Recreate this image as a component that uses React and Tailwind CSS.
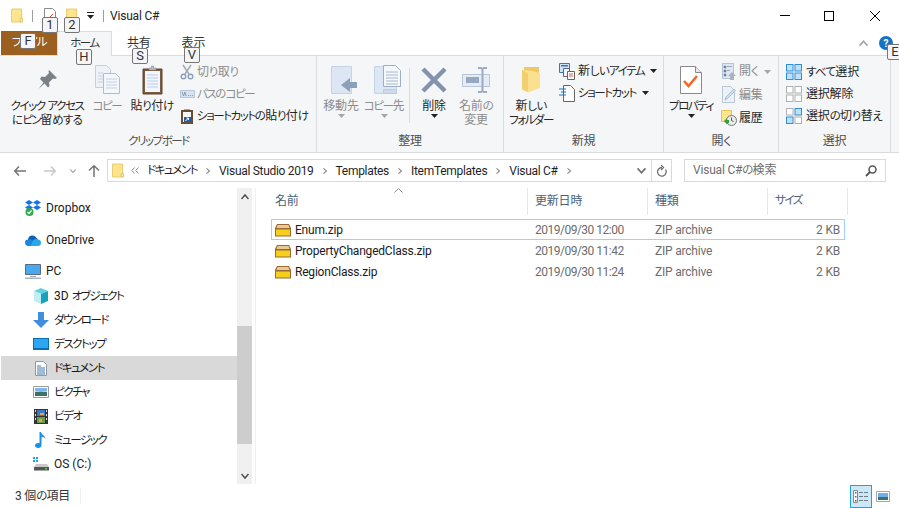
import React from "react";

const T = ({ children }) => (
  <>
    {String(children)
      .split(/([\u30a0-\u30ff]+|[\u3040-\u309f]+)/)
      .map((p, i) =>
        /^[\u30a0-\u30ff]/.test(p) ? (
          <span key={i} className="text-[11.5px] tracking-[-1.45px]">{p}</span>
        ) : /^[\u3040-\u309f]/.test(p) ? (
          <span key={i} className="text-[11.5px] tracking-[-0.7px]">{p}</span>
        ) : (
          p
        )
      )}
  </>
);

const Folder = ({ className = "" }) => (
  <svg viewBox="0 0 13 15" className={className}>
    <path d="M.5.5h11v14H.5z" fill="#fde58f" stroke="#e8c767" />
    <path d="M10 11h2.5v3.5H10z" fill="#fff3c4" stroke="#e3bd5b" />
  </svg>
);

const Key = ({ c, t }) => (
  <div className={`absolute h-[16px] w-[16px] rounded-[2px] border border-[#767676] bg-[#f3f5f8] text-center text-[13px] leading-[14px] tracking-normal text-[#333] ${c}`}>{t}</div>
);

const PinIcon = () => (
  <svg width="21" height="21" viewBox="0 0 21 21"><path d="M12 1l8 8-2 1-2-.5-4 4 .5 3.500-1.500 1.500-3.500-4-6 5.500 5-6.500-3.500-3.500L4.500 7.500 8 8l4-4-.5-1.500z" fill="#7a8087" /></svg>
);
const CopyIcon = () => (
  <svg width="25" height="29" viewBox="0 0 25 29">
    <path d="M.5.5h11l4 4v18H.5z" fill="#eef2f8" stroke="#c2cfdf" />
    <path d="M8.500 8.500h12l4 4v16h-16z" fill="#f3f6fa" stroke="#aebdd0" />
    <path d="M11 14h11M11 17h11M11 20h11M11 23h11M3 8h5M3 11h5M3 14h5M3 17h5" stroke="#c5d1e0" />
  </svg>
);
const PasteIcon = () => (
  <svg width="21" height="30" viewBox="0 0 21 30">
    <path d="M1 4h19v25H1z" fill="#7c5b3f" stroke="#5f4530" />
    <path d="M3 6h15v21H3z" fill="#f1f6ff" />
    <path d="M5 10h11M5 13h11M5 16h11M5 19h11M5 22h11" stroke="#b9cfe9" />
    <path d="M7 5V3h2.500V1h2v2H14v2z" fill="#b9bec4" stroke="#8a8f96" strokeWidth=".6" />
  </svg>
);
const ScissorsIcon = () => (
  <svg width="14" height="16" viewBox="0 0 14 16" fill="none">
    <path d="M3 1l6 9M11 1L5 10" stroke="#a3a9b0" strokeWidth="1.500" />
    <circle cx="3.500" cy="12.500" r="2.300" stroke="#8ba0bd" strokeWidth="1.400" />
    <circle cx="10.500" cy="12.500" r="2.300" stroke="#8ba0bd" strokeWidth="1.400" />
  </svg>
);
const PathIcon = () => (
  <svg width="15" height="8" viewBox="0 0 15 8" className="shrink-0">
    <path d="M.5.5h14v7H.5z" fill="#d8e2f0" stroke="#b7c7dc" />
    <path d="M2 2l1.500 4L5 2l1 4M8 5.500h1M10 5.500h1M12 5.500h1" stroke="#7a8aa0" strokeWidth=".8" fill="none" />
  </svg>
);
const ShortcutPasteIcon = () => (
  <svg width="14" height="16" viewBox="0 0 14 16">
    <path d="M1 2h12v14H1z" fill="#6b4c33" />
    <path d="M3 4h8v10H3z" fill="#f6f8fb" />
    <path d="M4 2V1h6v1z" fill="#a5a9ae" />
    <path d="M4 9h7v5H4z" fill="#1f5ea8" />
    <path d="M5.500 13l3-3M6.500 10h2v2" stroke="#fff" fill="none" />
  </svg>
);
const MoveIcon = () => (
  <svg width="27" height="28" viewBox="0 0 27 28" className="ml-[6px]">
    <path d="M.5.500h20v27H.5z" fill="#dce6f4" stroke="#c5d3e6" />
    <path d="M10 19l9-7v4h7v6h-7v4z" fill="#8ea0b8" />
  </svg>
);
const CopyToIcon = () => (
  <svg width="27" height="29" viewBox="0 0 27 29" className="ml-[6px]">
    <path d="M.5 1.500h22v27H.5z" fill="#dce6f4" stroke="#c5d3e6" />
    <path d="M9.500 24.500h13v4h-13z" fill="#cfdbeb" stroke="#bccbdf" />
    <path d="M9.500.5h12l5 5v16h-17z" fill="#f4f7fb" stroke="#9fafc3" />
    <path d="M12 7h12M12 10h12M12 13h12M12 16h12M12 19h12" stroke="#aab8ca" />
  </svg>
);
const DeleteIcon = () => (
  <svg width="26" height="26" viewBox="0 0 26 26"><path d="M2 2l22 22M24 2L2 24" stroke="#8493ad" strokeWidth="4.500" /></svg>
);
const RenameIcon = () => (
  <svg width="28" height="26" viewBox="0 0 28 26">
    <path d="M.5 7.500h27v12H.5z" fill="#e4ebf5" stroke="#b7c6da" />
    <path d="M4 10h13v6H4z" fill="#97a8c0" />
    <path d="M16 1h3l1.500 1L22 1h3M16 25h3l1.500-1 1.500 1h3M20.500 2v22" stroke="#9aabc2" strokeWidth="2" fill="none" />
  </svg>
);
const NewFolderIcon = () => (
  <svg width="20" height="27" viewBox="0 0 20 27">
    <path d="M3 1h15v21H3z" fill="#eec865" />
    <path d="M1 4l11 1 7 2v15l-12 4.500-6-3z" fill="#fbe08f" />
    <path d="M1 4l6 3v19l-6-3z" fill="#f2cf6f" />
  </svg>
);
const NewItemIcon = () => (
  <svg width="16" height="17" viewBox="0 0 16 17">
    <path d="M.5.5h10v9H.5z" fill="#cfe2f6" stroke="#3a76b4" />
    <path d="M2 2h7v1.500H2z" fill="#3a76b4" />
    <path d="M4.500 5.500h6l0 8h-6z" fill="#f4f7fb" stroke="#5d6670" />
    <path d="M8.500 8.500h7v8h-7z" fill="#fff" stroke="#666" />
    <path d="M10 11h4M10 13h4" stroke="#d4633a" />
  </svg>
);
const ShortcutIcon = () => (
  <svg width="16" height="17" viewBox="0 0 16 17" fill="none">
    <path d="M4.500.5h7l4 4v12h-11z" fill="#fff" stroke="#666" />
    <path d="M0 4h7M2 7h5M0 10h7" stroke="#1474c4" strokeWidth="1.200" />
  </svg>
);
const PropsIcon = () => (
  <svg width="22" height="28" viewBox="0 0 22 28" fill="none">
    <path d="M.5.5h15l6 6v21H.5z" fill="#fff" stroke="#8a8a8a" />
    <path d="M15.500.5v6h6" fill="#e8e8e8" stroke="#8a8a8a" />
    <path d="M4 15l4.500 5L17 10" stroke="#ef6a22" strokeWidth="2.500" />
  </svg>
);
const OpenIcon = () => (
  <svg width="14" height="17" viewBox="0 0 14 17" className="shrink-0">
    <path d="M.5.5h11v15H.5z" fill="#dde6f1" stroke="#b4c3d6" />
    <path d="M2 3h2v2H2zM2 7h2v2H2zM2 11h2v2H2zM5 3.500h5M5 7.500h3" stroke="#9badc3" />
    <path d="M6 13l4-4 4 4h-2v4H8v-4z" fill="#a9b4c3" />
  </svg>
);
const EditIcon = () => (
  <svg width="14" height="17" viewBox="0 0 14 17" fill="none" className="shrink-0">
    <path d="M.5.5h8l4 4v12H.5z" fill="#edf2f8" stroke="#b8c6d8" />
    <path d="M3 14l1-3 8-8 1.500 1.500-8 8z" fill="#d4dfec" stroke="#a9bbd1" />
  </svg>
);
const HistoryIcon = () => (
  <svg width="16" height="16" viewBox="0 0 16 16" className="shrink-0">
    <path d="M.5.5h10v11H.5z" fill="#fde58f" stroke="#e6c35c" />
    <circle cx="10.500" cy="10.500" r="5" fill="#ececec" stroke="#777" />
    <path d="M10.500 7.500v3l2 1" stroke="#555" fill="none" />
    <path d="M3 11l3-3v2h2v3H6v1.500z" fill="#34a03c" />
  </svg>
);
const SelAll = ({ none = false, invert = false }) => {
  const cell = (x, y, on) => (
    <rect key={`${x}${y}`} x={x} y={y} width="6.500" height="6.500" fill={on ? "#bfe0f8" : "#fff"} stroke={on ? "#2e8fdc" : "#b0b0b0"} />
  );
  return (
    <svg width="16" height="16" viewBox="0 0 16 16">
      {none
        ? [cell(.5, .5), cell(9, .5), cell(.5, 9), cell(9, 9)]
        : invert
        ? [cell(.5, .5), cell(9, .5, 1), cell(.5, 9, 1), cell(9, 9)]
        : [cell(.5, .5, 1), cell(9, .5, 1), cell(.5, 9, 1), cell(9, 9, 1)]}
    </svg>
  );
};

const Caret = ({ dim }) => (
  <svg width="7" height="4" viewBox="0 0 7 4" className="shrink-0"><path d="M0 0h7L3.500 4z" fill={dim ? "#a5a5a5" : "#222"} /></svg>
);

const Big = ({ w, icon, lines, caret, dim, gap = 0 }) => (
  <div className="flex shrink-0 flex-col items-center" style={{ width: w, marginLeft: gap }}>
    <div className="flex h-[39px] items-center justify-center">{icon}</div>
    {lines.map((l) => (
      <div key={l} className={`whitespace-nowrap text-center text-[12px] leading-[14px] ${dim ? "text-[#8c8c8c]" : "text-[#262626]"}`}><T>{l}</T></div>
    ))}
    {caret && <div className="mt-[1px]"><Caret dim={dim} /></div>}
  </div>
);

const Small = ({ icon, text, caret, dim, iconW = 16, gap = 3, h = 22 }) => (
  <div className="flex items-center whitespace-nowrap text-[12px]" style={{ height: h }}>
    <div className="flex shrink-0 items-center justify-center" style={{ width: iconW, marginRight: gap }}>{icon}</div>
    <span className={dim ? "text-[#8c8c8c]" : "text-[#262626]"}><T>{text}</T></span>
    {caret && <span className="ml-[6px]"><Caret dim={dim} /></span>}
  </div>
);

const Group = ({ w, label, children }) => (
  <div className="flex shrink-0 flex-col border-r border-[#dcdddf] pt-[4px]" style={{ width: w }}>
    <div className="flex h-[73px]">{children}</div>
    <div className="h-[16px] text-center text-[12px] leading-[16px] text-[#4f4f4f]"><T>{label}</T></div>
  </div>
);

const Chev = ({ dir = "right", color = "#8a8a8a", w = 6 }) => (
  <svg width={w} height={w} viewBox="0 0 8 8" className="shrink-0" fill="none">
    <path d={dir === "right" ? "M2 .5L6 4 2 7.500" : dir === "down" ? "M.5 2L4 6l3.500-4" : "M.5 6L4 2l3.500 4"} stroke={color} strokeWidth="1.500" />
  </svg>
);

const icons = {
  dropbox: (
    <svg width="16" height="16" viewBox="0 0 16 16">
      <path d="M4 0l4 2.500L4 5 0 2.500zM12 0l4 2.500L12 5 8 2.500zM4 5l4 2.500L4 10 0 7.500zM12 5l4 2.500-4 2.500-4-2.500z" fill="#1375e8" />
      <circle cx="4.500" cy="12" r="4" fill="#2fa84f" />
      <path d="M2.500 12l1.500 1.500L6.500 10.500" stroke="#fff" strokeWidth="1.200" fill="none" />
    </svg>
  ),
  onedrive: (
    <svg width="16" height="11" viewBox="0 0 16 11">
      <path d="M3 4.500A4.500 4.500 0 0 1 11.500 3 3.500 3.500 0 0 1 13 4.500L6 8z" fill="#0f5fb5" />
      <path d="M3.500 11A3.200 3.200 0 0 1 3 4.600C5 3.800 7 4 8 6l3 5z" fill="#1a86d8" />
      <path d="M8 5.500c1.500-1.500 3.500-1.800 5-1 2 0 3 1.500 3 3.300 0 1.700-1 3.200-3 3.200H5.500z" fill="#28a8ea" />
    </svg>
  ),
  pc: (
    <svg width="16" height="15" viewBox="0 0 16 15">
      <path d="M.5.5h15v10H.5z" fill="#4aa8ee" stroke="#5a6b7c" />
      <path d="M5 12h6v1H5z" fill="#9aa8b5" />
      <path d="M0 13.500h16V15H0z" fill="#a9b4bf" />
    </svg>
  ),
  cube: (
    <svg width="16" height="16" viewBox="0 0 16 16">
      <path d="M8 0l7 3-7 3-7-3z" fill="#5fd3e0" />
      <path d="M1 3l7 3v10l-7-3z" fill="#c2eef3" />
      <path d="M15 3L8 6v10l7-3z" fill="#16a2bd" />
    </svg>
  ),
  down: (
    <svg width="16" height="16" viewBox="0 0 16 16"><path d="M5 0h6v8h5l-8 8-8-8h5z" fill="#3f8fdc" /></svg>
  ),
  desktop: (
    <svg width="16" height="12" viewBox="0 0 16 12">
      <path d="M0 0h16v12H0z" fill="#0a6eb4" />
      <path d="M1 1h14v9H1z" fill="#2aa7f0" />
    </svg>
  ),
  doc: (
    <svg width="12" height="15" viewBox="0 0 12 15">
      <path d="M.5.5h8l3 3v11H.5z" fill="#fff" stroke="#8f9aa5" />
      <path d="M2 5h4M2 7h8M2 9h8M2 11h8M2 13h8" stroke="#3f79b0" />
    </svg>
  ),
  pic: (
    <svg width="16" height="12" viewBox="0 0 16 12">
      <path d="M.5.5h15v11H.5z" fill="#fff" stroke="#9a9a9a" />
      <path d="M2 2h12v4H2z" fill="#7db6e8" />
      <path d="M2 6h12v4H2z" fill="#3f6f66" />
      <path d="M2 5l6 1 6-1v1H2z" fill="#cfe3c8" />
    </svg>
  ),
  video: (
    <svg width="14" height="15" viewBox="0 0 14 15">
      <path d="M0 0h14v15H0z" fill="#333" />
      <path d="M3 1h8v6H3z" fill="#3f79c4" />
      <path d="M3 8h8v6H3z" fill="#6a9b4a" />
      <path d="M6 4h4v2H6zM5 10h3v3H5z" fill="#e3a73a" />
      <path d="M1 1h1v2H1zM1 5h1v2H1zM1 9h1v2H1zM12 1h1v2h-1zM12 5h1v2h-1zM12 9h1v2h-1z" fill="#ddd" />
    </svg>
  ),
  music: (
    <svg width="12" height="16" viewBox="0 0 12 16">
      <path d="M4.500 0h1.500c.5 3 4 3.500 4.500 7-1-1.500-2.500-2-4-2.200V13c0 1.700-1.500 3-3.300 3C1.200 16 0 15 0 13.500 0 12 1.500 11 3 11c.6 0 1 .1 1.500.3z" fill="#1a8fe8" />
    </svg>
  ),
  drive: (
    <svg width="16" height="14" viewBox="0 0 16 14">
      <path d="M0 0h2v2H0zM3 0h2v2H3zM0 3h2v2H0zM3 3h2v2H3z" fill="#1a9fe8" />
      <path d="M3 7h11l2 3H1z" fill="#c9c9c9" />
      <path d="M1 10h15v3.500H1z" fill="#555" />
      <path d="M12 11h2v1.500h-2z" fill="#45d04a" />
    </svg>
  ),
};

const NavItem = ({ icon, text, sel, indent, mb = 0 }) => (
  <div className={`flex h-[24px] shrink-0 items-center text-[12px] tracking-normal text-[#1a1a1a] ${sel ? "bg-[#d9d9d9]" : ""}`} style={{ marginBottom: mb }}>
    <div className="flex w-[16px] shrink-0 items-center justify-center" style={{ marginLeft: indent ? 32 : 24, marginRight: 5 }}>{icon}</div>
    <span className="whitespace-nowrap"><T>{text}</T></span>
  </div>
);

const Zip = () => (
  <svg width="16" height="14" viewBox="0 0 16 14" className="shrink-0">
    <path d="M2 1h12l2 4v8.500H0V5z" fill="#9a6a35" />
    <path d="M2.500 2h11l1 3h-13z" fill="#e9c995" />
    <path d="M1 6.500h14v6H1z" fill="#f5cf1b" />
  </svg>
);

const Row = ({ name, date, sel }) => (
  <div className={`grid h-[21px] w-[574px] grid-cols-[263px_120px_120px_69px] items-center border text-[12px] ${sel ? "border-[#99d1ff]" : "border-transparent"}`}>
    <div className="flex items-center pl-[3px]">
      <Zip />
      <span className="ml-[4px] whitespace-nowrap text-[#1a1a1a]">{name}</span>
    </div>
    <span className="whitespace-nowrap tracking-[-0.5px] text-[#6d6d6d]">{date}</span>
    <span className="whitespace-nowrap text-[#6d6d6d]">ZIP archive</span>
    <span className="pr-[4px] text-right text-[#6d6d6d]">2 KB</span>
  </div>
);

const Crumb = ({ children }) => <span className="whitespace-nowrap tracking-[-0.3px] text-[#1f1f1f]"><T>{children}</T></span>;
const Sep = () => <span className="mx-[8px]"><Chev color="#8a8a8a" /></span>;

export default function App() {
  return (
    <div className="relative flex h-[508px] w-[899px] flex-col overflow-hidden bg-white text-[12px] tracking-[-0.2px] [font-family:Roboto,'Noto_Sans_CJK_JP',sans-serif] [font-feature-settings:'palt']">
      {/* title bar */}
      <div className="flex h-[31px] shrink-0 items-center">
        <Folder className="ml-[11px] h-[15px] w-[12px]" />
        <div className="ml-[9px] h-[12px] w-px bg-[#a0a0a0]" />
        <svg width="12" height="15" viewBox="0 0 12 15" className="ml-[11px]">
          <path d="M.5.5h8l3 3v11H.5z" fill="#fff" stroke="#8a8a8a" />
          <path d="M6 9l3-3" stroke="#d4502a" />
        </svg>
        <Folder className="ml-[10px] h-[15px] w-[12px]" />
        <svg width="7" height="7" viewBox="0 0 7 7" className="ml-[9px]"><path d="M0 0h7v1H0zM0 3h7L3.500 7z" fill="#222" /></svg>
        <div className="ml-[9px] h-[12px] w-px bg-[#a0a0a0]" />
        <span className="ml-[6px] text-[12px] text-[#222]">Visual C#</span>
        <div className="ml-auto flex items-center">
          <div className="h-px w-[10px] bg-black" />
          <div className="ml-[34px] h-[10px] w-[10px] border border-black" />
          <svg width="10" height="10" viewBox="0 0 10 10" className="ml-[36px] mr-[19px]"><path d="M0 0l10 10M10 0L0 10" stroke="#000" /></svg>
        </div>
      </div>
      {/* tabs */}
      <div className="flex h-[24px] shrink-0 items-stretch pl-[1px] text-[12px]">
        <div className="flex w-[56px] items-center justify-center bg-[#9b5f20] text-white"><T>ファイル</T></div>
        <div className="relative mb-[-1px] flex w-[55px] items-center justify-center border-x border-t border-[#dadbdc] bg-[#f5f6f7] text-[#333]"><T>ホーム</T></div>
        <div className="ml-[15px] flex items-center text-[#333]">共有</div>
        <div className="ml-[31px] flex items-center text-[#333]">表示</div>
        <div className="ml-auto flex items-center pr-[6px]">
          <Chev dir="up" color="#a5a5a5" w={9} />
          <div className="ml-[11px] flex h-[14px] w-[14px] items-center justify-center rounded-full bg-[#1573c4] text-[10px] font-bold text-white">?</div>
        </div>
      </div>
      {/* ribbon */}
      <div className="flex h-[98px] shrink-0 border-y border-[#dadbdc] bg-[#f5f6f7] pl-[1px]">
        <Group w={316} label="クリップボード">
          <Big w={86} gap={3} icon={<PinIcon />} lines={["クイック アクセス", "にピン留めする"]} />
          <Big w={34} icon={<CopyIcon />} lines={["コピー"]} dim />
          <Big w={56} icon={<PasteIcon />} lines={["貼り付け"]} />
          <div className="flex flex-col pt-[1px]">
            <Small iconW={14} icon={<ScissorsIcon />} text="切り取り" dim />
            <Small iconW={14} icon={<PathIcon />} text="パスのコピー" dim />
            <Small iconW={14} icon={<ShortcutPasteIcon />} text="ショートカットの貼り付け" />
          </div>
        </Group>
        <Group w={187} label="整理">
          <Big w={42} gap={3} icon={<MoveIcon />} lines={["移動先"]} caret dim />
          <Big w={44} icon={<CopyToIcon />} lines={["コピー先"]} caret dim />
          <div className="mx-[3px] my-[8px] h-[55px] w-px bg-[#dcdddf]" />
          <Big w={42} icon={<DeleteIcon />} lines={["削除"]} caret />
          <Big w={42} icon={<RenameIcon />} lines={["名前の", "変更"]} dim />
        </Group>
        <Group w={160} label="新規">
          <Big w={50} gap={2} icon={<NewFolderIcon />} lines={["新しい", "フォルダー"]} />
          <div className="ml-[3px] flex flex-col">
            <Small icon={<NewItemIcon />} text="新しいアイテム" caret />
            <Small icon={<ShortcutIcon />} text="ショートカット" caret />
          </div>
        </Group>
        <Group w={115} label="開く">
          <Big w={52} gap={1} icon={<PropsIcon />} lines={["プロパティ"]} caret />
          <div className="ml-[5px] flex flex-col">
            <Small iconW={14} h={23} icon={<OpenIcon />} text="開く" caret dim />
            <Small iconW={14} h={23} icon={<EditIcon />} text="編集" dim />
            <Small iconW={14} h={23} icon={<HistoryIcon />} text="履歴" />
          </div>
        </Group>
        <Group w={112} label="選択">
          <div className="ml-[7px] flex flex-col pt-[1px]">
            <Small gap={4} icon={<SelAll />} text="すべて選択" />
            <Small gap={4} icon={<SelAll none />} text="選択解除" />
            <Small gap={4} icon={<SelAll invert />} text="選択の切り替え" />
          </div>
        </Group>
      </div>
      {/* address bar */}
      <div className="flex h-[35px] shrink-0 items-center pl-[14px] text-[12px]">
        <svg width="12" height="10" viewBox="0 0 12 10" fill="none"><path d="M12 5H1M5 .5L.8 5 5 9.500" stroke="#737373" strokeWidth="1.500" /></svg>
        <svg width="12" height="10" viewBox="0 0 12 10" fill="none" className="ml-[18px]"><path d="M0 5h11M7 .5L11.200 5 7 9.500" stroke="#c8c8c8" strokeWidth="1.500" /></svg>
        <span className="ml-[14px]"><Chev dir="down" color="#9a9a9a" w={6} /></span>
        <svg width="12" height="12" viewBox="0 0 12 12" fill="none" className="ml-[12px]"><path d="M6 12V1M1 5.500L6 .8l5 4.700" stroke="#737373" strokeWidth="1.500" /></svg>
        <div className="ml-[7px] flex h-[23px] w-[565px] items-center border border-[#d9d9d9]">
          <Folder className="ml-[4px] h-[15px] w-[12px]" />
          <svg width="8" height="7" viewBox="0 0 8 7" fill="none" className="ml-[7px]"><path d="M3.500.5L.8 3.500l2.700 3M7.500.5L4.800 3.500l2.700 3" stroke="#8a8a8a" /></svg>
          <span className="ml-[8px]"><Crumb>ドキュメント</Crumb></span>
          <Sep />
          <Crumb>Visual Studio 2019</Crumb>
          <Sep />
          <Crumb>Templates</Crumb>
          <Sep />
          <Crumb>ItemTemplates</Crumb>
          <Sep />
          <Crumb>Visual C#</Crumb>
          <Sep />
          <div className="ml-auto flex h-full items-center">
            <Chev dir="down" color="#6f6f6f" w={9} />
            <div className="ml-[5px] flex h-full w-[20px] items-center justify-center border-l border-[#d9d9d9]">
              <svg width="11" height="12" viewBox="0 0 11 12" fill="none"><path d="M9.500 4.500A4.300 4.300 0 1 1 6 2.500M5 0l2.500 2.500L5 5" stroke="#6f6f6f" strokeWidth="1.300" /></svg>
            </div>
          </div>
        </div>
        <div className="ml-[12px] flex h-[23px] w-[202px] items-center justify-between border border-[#d9d9d9] px-[8px] text-[#6d6d6d]">
          <span><T>Visual C#の検索</T></span>
          <svg width="12" height="12" viewBox="0 0 12 12" fill="none"><circle cx="7.500" cy="4.500" r="3.500" stroke="#555" strokeWidth="1.500" /><path d="M5 7l-4 4" stroke="#555" strokeWidth="2" /></svg>
        </div>
      </div>
      {/* main */}
      <div className="flex h-[296px] shrink-0">
        <div className="w-[237px] shrink-0 overflow-hidden pl-[1px] pt-[8px]">
          <div className="flex flex-col">
            <NavItem icon={icons.dropbox} text="Dropbox" mb={8} />
            <NavItem icon={icons.onedrive} text="OneDrive" mb={7} />
            <NavItem icon={icons.pc} text="PC" mb={1} />
            <NavItem icon={icons.cube} text="3D オブジェクト" indent />
            <NavItem icon={icons.down} text="ダウンロード" indent />
            <NavItem icon={icons.desktop} text="デスクトップ" indent />
            <NavItem icon={icons.doc} text="ドキュメント" indent sel />
            <NavItem icon={icons.pic} text="ピクチャ" indent />
            <NavItem icon={icons.video} text="ビデオ" indent />
            <NavItem icon={icons.music} text="ミュージック" indent />
            <NavItem icon={icons.drive} text="OS (C:)" indent />
          </div>
        </div>
        {/* scrollbar */}
        <div className="flex w-[15px] shrink-0 flex-col items-center bg-[#f0f0f0]">
          <div className="flex h-[18px] w-full shrink-0 items-center justify-center"><Chev dir="up" color="#505050" w={8} /></div>
          <div className="h-[120px] w-full shrink-0" />
          <div className="h-[118px] w-full shrink-0 bg-[#cdcdcd]" />
          <div className="flex flex-1 items-end pb-[4px]"><Chev dir="down" color="#505050" w={8} /></div>
        </div>
        <div className="ml-[3px] w-px shrink-0 bg-[#f0f0f0]" />
        {/* list */}
        <div className="relative ml-[15px] flex-1">
          <div className="grid h-[27px] w-[577px] grid-cols-[257px_120px_120px_80px] items-center text-[12px] text-[#4c607a]">
            <div className="flex h-full items-center border-r border-[#e5e5e5] pb-[2px] pl-[4px]">名前</div>
            <div className="flex h-full items-center border-r border-[#e5e5e5] pb-[2px] pl-[7px]">更新日時</div>
            <div className="flex h-full items-center border-r border-[#e5e5e5] pb-[2px] pl-[7px]">種類</div>
            <div className="flex h-full items-center border-r border-[#e5e5e5] pb-[2px] pl-[7px]"><T>サイズ</T></div>
          </div>
          <svg width="9" height="5" viewBox="0 0 9 5" fill="none" className="absolute left-[123px] top-[0px]"><path d="M.5 4.500L4.500 .5l4 4" stroke="#8a8a8a" /></svg>
          <div className="mt-[4px] flex flex-col">
            <Row name="Enum.zip" date="2019/09/30 12:00" sel />
            <Row name="PropertyChangedClass.zip" date="2019/09/30 11:42" />
            <Row name="RegionClass.zip" date="2019/09/30 11:24" />
          </div>
        </div>
      </div>
      {/* status */}
      <div className="flex flex-1 items-center pl-[15px] text-[12px] text-[#333]">
        <span className="whitespace-nowrap"><T>3 個の項目</T></span>
        <div className="ml-[10px] h-[16px] w-px bg-[#eeeeee]" />
        <div className="ml-auto flex items-center pr-[9px]">
          <div className="flex h-[23px] w-[22px] items-center justify-center border border-[#26a0da] bg-[#cbe8f6]">
            <svg width="16" height="13" viewBox="0 0 16 13" fill="none">
              <path d="M.5.5h4v12h-4z" fill="#fff" stroke="#8a8a8a" />
              <path d="M2 2h1.500v1.500H2zM2 6h1.500v1.500H2z" fill="#666" />
              <path d="M2 10h1.500v1.500H2z" fill="#c0392b" />
              <path d="M6 2.500h4M11 2.500h4M6 6.500h4M11 6.500h4M6 10.500h4M11 10.500h4" stroke="#6f7f8a" />
            </svg>
          </div>
          <svg width="14" height="11" viewBox="0 0 14 11" className="ml-[4px]">
            <path d="M.5.5h13v10H.5z" fill="#fff" stroke="#a5a5a5" />
            <path d="M2 2h10v4H2z" fill="#6db0ea" />
            <path d="M2 6h10v3H2z" fill="#3f6f66" />
          </svg>
        </div>
      </div>
      {/* key tips */}
      <Key c="left-[42px] top-[17px]" t="1" />
      <Key c="left-[64px] top-[17px]" t="2" />
      <Key c="left-[20px] top-[33px]" t="F" />
      <Key c="left-[76px] top-[49px]" t="H" />
      <Key c="left-[132px] top-[48px]" t="S" />
      <Key c="left-[184px] top-[47px]" t="V" />
      <Key c="left-[887px] top-[44px]" t="E" />
    </div>
  );
}
